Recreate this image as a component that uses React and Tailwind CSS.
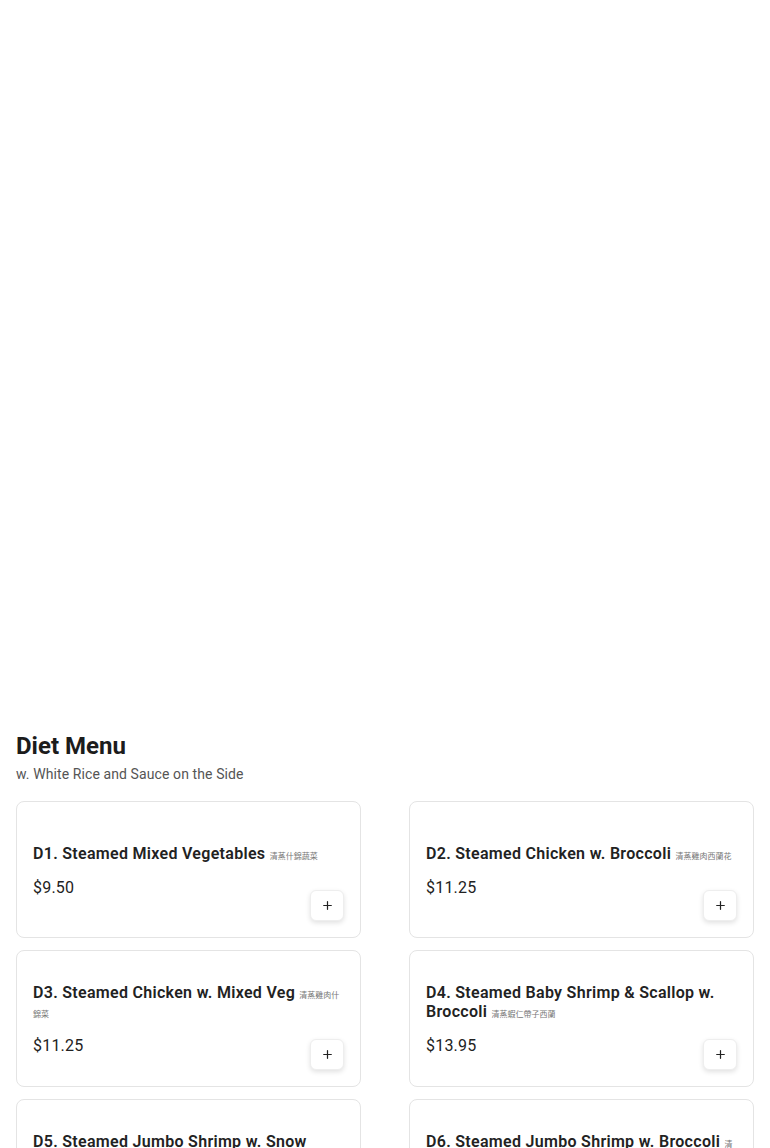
import { Plus } from 'lucide-react';

const ITEMS = [
  { code: 'D1', name: 'Steamed Mixed Vegetables', zh: '清蒸什錦蔬菜', price: '$9.50' },
  { code: 'D2', name: 'Steamed Chicken w. Broccoli', zh: '清蒸雞肉西蘭花', price: '$11.25' },
  { code: 'D3', name: 'Steamed Chicken w. Mixed Veg', zh: '清蒸雞肉什錦菜', price: '$11.25' },
  { code: 'D4', name: 'Steamed Baby Shrimp & Scallop w. Broccoli', zh: '清蒸蝦仁帶子西蘭', price: '$13.95' },
  { code: 'D5', name: 'Steamed Jumbo Shrimp w. Snow Peas', zh: '清蒸大蝦雪豆', price: '$13.95' },
  { code: 'D6', name: 'Steamed Jumbo Shrimp w. Broccoli', zh: '清蒸大蝦西蘭花', price: '$13.95' },
];

const MenuCard = ({ item }) => (
  <div className="relative flex min-h-[137px] items-center rounded-lg border border-[#e4e4e4] bg-white p-4 pt-[20px]">
    <div className="flex-1">
      <h3 className="text-base font-semibold leading-[19px] tracking-[0.3px] text-[#222]">
        {item.code}. {item.name}{' '}
        <span className="align-baseline text-[8px] font-normal leading-none tracking-normal text-[#777]">{item.zh}</span>
      </h3>
      <p className="mt-[13px] text-base leading-6 tracking-[0.2px] text-[#222]">{item.price}</p>
    </div>
    <button
      type="button"
      className="absolute bottom-4 right-4 flex h-[31px] w-[34px] items-center justify-center rounded-md border border-[#eeeeee] bg-white text-[#222] shadow-[0_2px_5px_rgba(0,0,0,0.12)]"
    >
      <Plus size={13} strokeWidth={2.25} />
    </button>
  </div>
);

export default function App() {
  return (
    <div className="min-h-screen bg-white font-['Roboto','Noto_Sans_CJK_SC',sans-serif]">
      <div className="h-[730px]" />
      <section className="px-4 pb-10">
        <h2 className="text-2xl font-bold leading-8 text-[#1c1c1c]">Diet Menu</h2>
        <p className="mt-0.5 text-sm leading-5 tracking-[0.1px] text-[#555]">w. White Rice and Sauce on the Side</p>
        <div className="mt-[17px] grid grid-cols-2 gap-x-12 gap-y-3">
          {ITEMS.map(item => (
            <MenuCard key={item.code} item={item} />
          ))}
        </div>
      </section>
    </div>
  );
}
